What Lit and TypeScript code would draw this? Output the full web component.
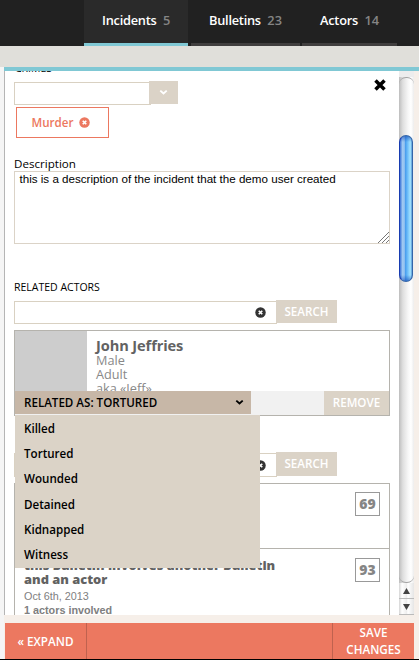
import { LitElement, html, css, svg } from "lit";
import { customElement } from "lit/decorators.js";
import { classMap } from "lit/directives/class-map.js";

const tabs = [
  { id: "incidents", label: "Incidents", count: 5, active: true },
  { id: "bulletins", label: "Bulletins", count: 23, active: false },
  { id: "actors", label: "Actors", count: 14, active: false },
];
const roles = ["Killed", "Tortured", "Wounded", "Detained", "Kidnapped", "Witness"];

const clearIcon = (size: number) => html`<svg class="clear" width=${size} height=${size} viewBox="0 0 12 12">
  ${svg`<circle cx="6" cy="6" r="5.7" fill="currentColor"/><path d="M4.1 4.1l3.8 3.8M7.9 4.1l-3.8 3.8" stroke="#fff" stroke-width="1.9"/>`}
</svg>`;
const chevron = () => html`<svg class="chev" width="9" height="7" viewBox="0 0 9 7">
  ${svg`<path d="M1.3 1.6l3.2 2.8 3.2-2.8" fill="none" stroke="currentColor" stroke-width="1.9"/>`}
</svg>`;

@customElement("app-scrollbar")
class AppScrollbar extends LitElement {
  static styles = css`
    :host { display: flex; flex-direction: column; width: 15px; height: 544px; background: linear-gradient(90deg, #bdbdbd, #dedede 25%, #f6f6f6 60%, #fff 80%, #ececec); }
    .cap { height: 6px; background: #ededed; }
    .track { flex: 1; border-radius: 7px; border: solid #a5a5a5; border-width: 1px 0; padding-top: 57px; box-sizing: border-box; background: linear-gradient(90deg, #bdbdbd, #dedede 25%, #f6f6f6 60%, #fff 80%, #ececec); }
    .thumb { height: 147px; width: 14px; box-sizing: border-box; border-radius: 7px; border: 1px solid #3465a8; border-left-color: #173bb0;
      background: linear-gradient(180deg, #174bb599, transparent 6px, transparent 139px, #174bb599), linear-gradient(90deg, #3b72d6, #a4cdf3 22%, #8abdf0 38%, #4ba0ee 46%, #6bbcf9 62%, #a5e4ff 86%, #5899d5); }
    .btn { height: 16px; display: flex; align-items: center; justify-content: center; background: linear-gradient(90deg, #d5d5d5, #fff 20%, #eee 50%, #fff 60%, #e5e5e5); border-bottom: 1px solid #bbb; box-sizing: border-box; color: #444; }
  `;
  render() {
    return html`<div class="cap"></div><div class="track"><div class="thumb"></div></div>
      <div class="btn"><svg width="7" height="6"><path d="M0 6L3.5 0 7 6z" fill="currentColor"/></svg></div>
      <div class="btn"><svg width="7" height="6"><path d="M0 0h7L3.5 6z" fill="currentColor"/></svg></div>`;
  }
}

@customElement("app-root")
class AppRoot extends LitElement {
  static styles = css`
    :host { display: block; width: 419px; height: 660px; overflow: hidden; background: #f5f5f5; font: 11.6px/14px "Open Sans", sans-serif; color: #000; white-space: nowrap; }
    * { box-sizing: border-box; }
    svg { display: block; flex: none; }
    .nav { display: flex; height: 46px; background: #212121; padding-left: 84px; }
    .tab { height: 46px; border-bottom: 3px solid #403e3e; padding: 11px 0 0 18px; font-size: 12.8px; line-height: 18px; font-weight: 600; color: #fff; letter-spacing: -.25px; }
    .tab.active { background: #2a2a2a; border-color: #80c8d4; }
    .incidents { width: 104px; margin-right: 3px; }
    .bulletins { width: 109px; margin-right: 2px; }
    .actors { width: 95px; }
    .count { color: #858585; margin-left: 6.5px; letter-spacing: 0; }
    .strip { height: 21px; background: #e0dfda; }
    .panel { margin-left: 4px; border-top: 4px solid #80c8d4; height: 592px; background: #f6efe9; }
    .main { display: flex; height: 544px; }
    .content { width: 395px; height: 544px; overflow: hidden; border-left: 1px solid #b5b5b5; background: #fff; padding-left: 9px; position: relative; }
    .close { position: absolute; left: 369px; top: 8px; }
    .crimes { height: 10px; margin-top: -10px; margin-bottom: 10px; line-height: 15px; font-size: 10.5px; padding-left: 1px; }
    .combo { display: flex; height: 24px; }
    .combo .box { width: 137px; height: 23px; margin-top: 1px; border: 1px solid #d9d1c2; }
    .combo .drop { width: 29px; height: 23px; margin-left: -2px; background: #dbd3c7; color: #fff; display: flex; justify-content: center; padding-top: 8px; z-index: 1; }
    .tag { display: flex; align-items: center; width: 93px; height: 31px; margin: 2px 0 0 2px; border: 1px solid #ec7860; color: #ec7860; padding-left: 14.5px; font-weight: 600; gap: 6px; }
    .label { margin-top: 18px; height: 15px; line-height: 15px; }
    .area { width: 376px; height: 73px; border: 1px solid #dbd3c7; font: 11.62px/14px "Liberation Sans", sans-serif; padding: 0 4.5px; display: flex; justify-content: space-between; }
    .area .grip { align-self: flex-end; margin-right: -4.5px; }
    .label.caps { font-size: 10.5px; margin: 36px 0 5px; }
    .search { display: flex; height: 24px; }
    .search .box { width: 263px; height: 23px; margin-top: 1px; border: 1px solid #d9d1c2; display: flex; align-items: center; justify-content: flex-end; padding-right: 10px; color: #333; }
    .btn { background: #dbd3c7; color: #fff; font-weight: 600; display: flex; align-items: center; justify-content: center; }
    .search .btn { width: 61px; height: 23px; margin-left: -1px; }
    .card { position: relative; width: 376px; height: 86px; margin-top: 6px; border: 1px solid #b5b3ad; }
    .info { display: flex; height: 60px; overflow: hidden; color: #888; line-height: 14px; font-size: 12.7px; }
    .photo { width: 72px; background: #cdcdcd; margin-right: 9px; }
    .name { font-size: 14.6px; line-height: 17px; font-weight: 700; color: #626262; margin-top: 6px; margin-bottom: -1px; letter-spacing: -.1px; }
    .bar { display: flex; height: 24px; background: #f1f1f1; }
    .related { width: 236px; height: 23px; background: #c7b7a7; font-weight: 600; display: flex; align-items: center; justify-content: space-between; padding: 0 7px 0 9px; }
    .bar .btn { width: 65px; margin-left: auto; }
    .menu { position: absolute; left: 0; top: 84px; width: 245px; height: 153px; background: #dbd3c7; z-index: 2; padding: 1px 0 0 9px; font-weight: 600; line-height: 25px; }
    .menu .item { height: 25.2px; }
    .second { margin-top: 36px; }
    .second .btn { height: 24px; }
    .second .box { height: 24px; }
    .list { width: 376px; border: 1px solid #b5b3ad; margin-top: 7px; height: 190px; }
    .row { display: flex; justify-content: space-between; height: 65px; padding: 8px 9px 0; border-bottom: 1px solid #b5b3ad; }
    .row + .row { height: 124px; padding-top: 9px; }
    .badge { width: 25px; height: 24px; border: 1px solid #999; color: #858585; font-weight: 800; font-size: 14px; display: flex; align-items: center; justify-content: center; }
    .title { font-size: 12.87px; line-height: 14px; font-weight: 800; color: #626262; white-space: pre; }
    .meta { font: 10.8px/14px "Liberation Sans", sans-serif; color: #808080; margin-top: 3px; }
    .foot { display: flex; width: 409px; height: 36px; margin: 8px 0 0 1px; background: #ec7860; color: #fff; font-weight: 600; font-size: 11.7px; text-align: center; line-height: 17px; }
    .expand { width: 82px; border-right: 1px solid #bf624f; padding-top: 10px; }
    .save { margin-left: auto; width: 82px; border-left: 1px solid #bf624f; padding-top: 1px; }
    .base { height: 1px; background: #000; }
  `;
  render() {
    return html`
      <nav class="nav">${tabs.map(t => html`<div class=${classMap({ tab: true, [t.id]: true, active: t.active })}>${t.label}<span class="count">${t.count}</span></div>`)}</nav>
      <div class="strip"></div>
      <div class="panel">
        <div class="main">
          <div class="content">
            <svg class="close" width="12" height="12"><path d="M1.5 1.5l9 9M10.5 1.5l-9 9" stroke="#000" stroke-width="3.5"/></svg>
            <div class="crimes">CRIMES</div>
            <div class="combo"><div class="box"></div><div class="drop">${chevron()}</div></div>
            <div class="tag">Murder ${clearIcon(11)}</div>
            <div class="label">Description</div>
            <div class="area">this is a description of the incident that the demo user created
              <svg class="grip" width="12" height="12"><path d="M1 12L12 1M5 12l7-7M9 12l3-3" stroke="#777"/></svg>
            </div>
            <div class="label caps">RELATED ACTORS</div>
            <div class="search"><div class="box">${clearIcon(11)}</div><div class="btn">SEARCH</div></div>
            <div class="card">
              <div class="info"><div class="photo"></div><div><div class="name">John Jeffries</div>Male<br>Adult<br>aka «Jeff»</div></div>
              <div class="bar"><div class="related">RELATED AS: TORTURED ${chevron()}</div><div class="btn">REMOVE</div></div>
              <div class="menu">${roles.map(r => html`<div class="item">${r}</div>`)}</div>
            </div>
            <div class="search second"><div class="box">${clearIcon(11)}</div><div class="btn">SEARCH</div></div>
            <div class="list">
              <div class="row"><div></div><div class="badge">69</div></div>
              <div class="row"><div><div class="title">this bulletin involves another bulletin
and an actor</div><div class="meta">Oct 6th, 2013<br><b>1 actors involved</b></div></div><div class="badge">93</div></div>
            </div>
          </div>
          <app-scrollbar></app-scrollbar>
        </div>
        <div class="foot"><div class="expand">« EXPAND</div><div class="save">SAVE<br>CHANGES</div></div>
      </div>
      <div class="base"></div>`;
  }
}
